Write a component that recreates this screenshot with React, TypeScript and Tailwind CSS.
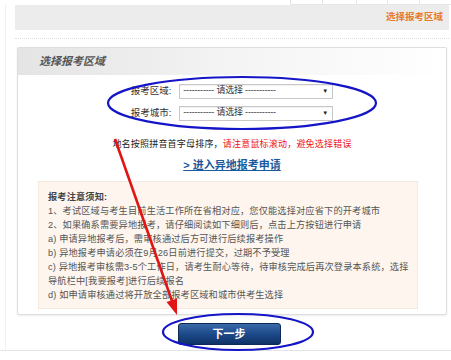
// Exam-region selection step: choose region + city, read the notice, continue.

const FONT = "font-['Liberation_Sans','Noto_Sans_CJK_SC',sans-serif]"

const NOTICE_LINES = [
    '1、考试区域与考生目前生活工作所在省相对应，您仅能选择对应省下的开考城市',
    '2、如果确系需要异地报考，请仔细阅读如下细则后，点击上方按钮进行申请',
    'a) 申请异地报考后，需审核通过后方可进行后续报考操作',
    'b) 异地报考申请必须在9月26日前进行提交，过期不予受理',
    'c) 异地报考审核需3-5个工作日，请考生耐心等待，待审核完成后再次登录本系统，选择',
    '导航栏中[我要报考]进行后续报名',
    'd) 如申请审核通过将开放全部报考区域和城市供考生选择',
]

function SelectRow({ label }: { label: string }) {
    return (
        <div className="flex items-center justify-center gap-[8px] h-[16px]">
            <span className="text-[9.5px] text-[#333]">{label}</span>
            <div className="w-[154px] h-[15px] border border-[#c8c8c8] bg-white flex items-center justify-between pl-[3px] pr-[4px] shadow-[inset_0_1px_1px_rgba(0,0,0,0.06)]">
                <span className="text-[9px] text-[#333] tracking-[-0.2px]">----------- 请选择 -----------</span>
                <span className="text-[6px] text-[#222]">▼</span>
            </div>
        </div>
    )
}

export default function App() {
    return (
        <div className={`relative w-[451px] h-[360px] overflow-hidden bg-white ${FONT}`}>
            {/* faint table edge at the top right */}
            <div className="ml-[290px] flex h-[5px] border-b border-[#e6e6e6]">
                <div className="w-[32px] border-l border-[#e6e6e6]" />
                <div className="w-[34px] border-l border-[#e6e6e6]" />
                <div className="w-[32px] border-l border-[#e6e6e6]" />
                <div className="w-[32px] border-l border-[#e6e6e6]" />
                <div className="w-[32px] border-l border-[#e6e6e6]" />
            </div>

            <div className="ml-[5px] border-l border-[#f0f0f0] h-[345px]">
                {/* breadcrumb bar */}
                <div className="ml-[9px] w-[434px] h-[25px] bg-[#ececec] flex items-center justify-end pr-[6px]">
                    <span className="text-[9.5px] font-bold text-[#e8792e]">选择报考区域</span>
                </div>
                <div className="mt-[8px] ml-[9px] w-[434px] border-t border-dotted border-[#dcdcdc]" />

                {/* main panel */}
                <div className="mt-[8px] ml-[11px] w-[430px] h-[268px] border border-[#dedede] rounded-[2px] shadow-[0_1px_2px_rgba(0,0,0,0.08)] flex flex-col">
                    <div className="h-[27px] bg-gradient-to-r from-[#e4e4e4] via-[#f4f4f4] to-white flex items-center pl-[21px]">
                        <span className="text-[11px] font-bold italic text-[#555]">选择报考区域</span>
                    </div>

                    <div className="mt-[8px] flex flex-col gap-[6px]">
                        <SelectRow label="报考区域:" />
                        <SelectRow label="报考城市:" />
                    </div>

                    <p className="mt-[17px] text-center text-[9px] leading-[12px] tracking-[0.2px] text-[#222]">
                        地名按照拼音首字母排序，<span className="text-[#ee1111]">请注意鼠标滚动，避免选择错误</span>
                    </p>

                    <a className="mt-[8px] self-center text-[11px] leading-[14px] font-bold text-[#1a5a9c] underline">
                        &gt; 进入异地报考申请
                    </a>

                    <div className="mt-[9px] ml-[20px] w-[380px] h-[128px] bg-[#fdf5ee] border border-[#f5e9de] pt-[8px] pl-[9px] text-[9.2px] leading-[14px] tracking-[0.15px] text-[#555]">
                        <div className="font-bold text-[#444]">报考注意须知:</div>
                        {NOTICE_LINES.map((line) => (
                            <div key={line} className="whitespace-nowrap">{line}</div>
                        ))}
                    </div>
                </div>

                <div className="mt-[8px] flex justify-center pl-[1px]">
                    <button className="w-[103px] h-[22px] rounded-[3px] bg-gradient-to-b from-[#3a6aa8] via-[#1d4a8a] to-[#0e3266] border border-[#0b2a57] text-white text-[11px] font-bold">
                        下一步
                    </button>
                </div>
            </div>
            <div className="absolute left-0 top-[350px] w-[451px] border-t border-[#e4e4e4]" />

            {/* annotation marks drawn over the page */}
            <svg className="absolute left-0 top-0 pointer-events-none" width="451" height="360" viewBox="0 0 451 360">
                <ellipse cx="242" cy="103" rx="134" ry="26" fill="none" stroke="#1515c8" strokeWidth="2.2" />
                <ellipse cx="238" cy="332" rx="75" ry="18" fill="none" stroke="#1515c8" strokeWidth="2.2" />
                <line x1="115" y1="139" x2="172" y2="301" stroke="#e01515" strokeWidth="2.6" />
                <polygon points="177,315 166.5,302 177,298.5" fill="#e01515" />
            </svg>
        </div>
    )
}
